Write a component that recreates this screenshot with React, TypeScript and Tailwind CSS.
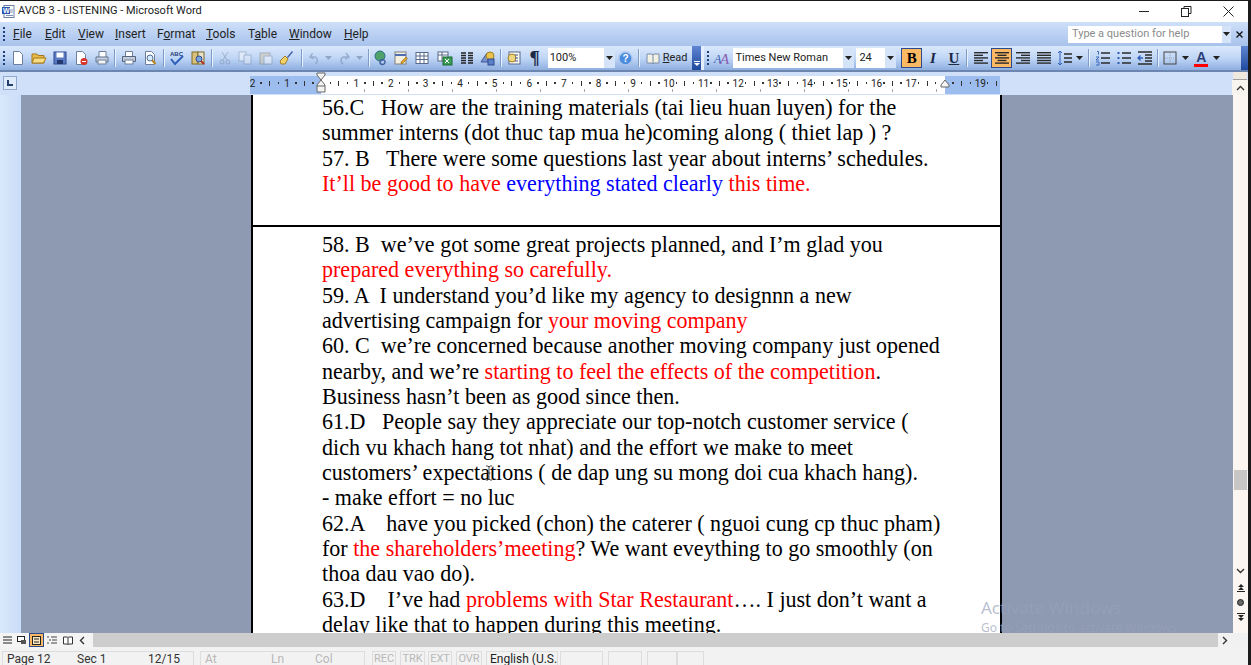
import type { ReactNode } from "react"

const uiFont = "font-['Roboto',sans-serif]"

function Sep({ className }: { className: string }) {
  return (
    <div className={`flex justify-center ${className}`}>
      <div className="w-px h-[18px] mt-[3px] bg-[#7f9cc9] border-r border-[#e8f1fd] box-content" />
    </div>
  )
}

function Slot({ className, children }: { className: string; children: ReactNode }) {
  return <div className={`flex items-center justify-center h-[24px] shrink-0 ${className}`}>{children}</div>
}

function Ico({ children, size = 16 }: { children: ReactNode; size?: number }) {
  return (
    <svg width={size} height={size} viewBox="0 0 16 16" fill="none">
      {children}
    </svg>
  )
}

function Grip() {
  return (
    <div className="flex flex-col gap-[2px]">
      {[0, 1, 2, 3].map((i) => (
        <div key={i} className="w-[2px] h-[2px] bg-[#1f3f7a]" />
      ))}
    </div>
  )
}

function DropArrow() {
  return (
    <svg width="7" height="4" viewBox="0 0 7 4">
      <path d="M0 0h7L3.5 4z" fill="#222" />
    </svg>
  )
}

function FadeArrow() {
  return (
    <svg width="7" height="4" viewBox="0 0 7 4">
      <path d="M0 0h7L3.5 4z" fill="#8ea6c8" />
    </svg>
  )
}

function Page({ mark }: { mark?: ReactNode }) {
  return (
    <Ico>
      <path d="M3.5 1.5h6l3 3v10h-9z" fill="#fff" stroke="#6d7f9c" />
      {mark}
    </Ico>
  )
}

function Lines({ kind }: { kind: "left" | "center" | "right" | "full" }) {
  const rows = kind === "full" ? [14, 14, 14, 14, 14] : [14, 9, 14, 9, 14]
  return (
    <svg width="16" height="14" viewBox="0 0 16 14">
      {rows.map((w, i) => {
        const x = kind === "center" ? 8 - w / 2 : kind === "right" ? 15 - w : 1
        return <rect key={i} x={x} y={1 + i * 2.6} width={w} height="1.4" fill="#2b2b2b" />
      })}
    </svg>
  )
}

function Toolbar() {
  return (
    <div className="flex h-[24px] w-full bg-gradient-to-b from-[#dbe8fb] via-[#c0d6f6] to-[#8fafe0] border-b-2 border-[#6c86b0] box-content">
      <Slot className="w-[7px]"><Grip /></Slot>
      <Slot className="w-[21px]"><Page /></Slot>
      <Slot className="w-[21px]">
        <Ico>
          <path d="M1 4h5l1 1.5h6V13H1z" fill="#e8b948" stroke="#a57a1e" />
          <path d="M3 8h12l-2.5 5H1z" fill="#f7dc84" stroke="#a57a1e" />
        </Ico>
      </Slot>
      <Slot className="w-[21px]">
        <Ico>
          <rect x="2" y="2" width="12" height="12" fill="#5a7bc4" stroke="#2f4a8f" />
          <rect x="4.5" y="2.5" width="7" height="5" fill="#fff" />
          <rect x="5" y="10" width="6" height="4" fill="#26396e" />
        </Ico>
      </Slot>
      <Slot className="w-[21px]">
        <Page mark={<g><circle cx="11" cy="11.5" r="3.5" fill="#d9342b" /><rect x="9" y="11" width="4" height="1" fill="#fff" /></g>} />
      </Slot>
      <Slot className="w-[21px]">
        <Ico>
          <path d="M5 1.5h7v6H5z" fill="#fff" stroke="#6d7f9c" />
          <path d="M2 7h12v5H2z" fill="#c9d3e2" stroke="#5f6f8a" />
          <rect x="4" y="10" width="8" height="4" fill="#f4f4f4" stroke="#6d7f9c" />
        </Ico>
      </Slot>
      <Sep className="w-[7px]" />
      <Slot className="w-[21px]">
        <Ico>
          <path d="M4.5 1.5h7v5h-7z" fill="#fff" stroke="#6d7f9c" />
          <path d="M1.5 6.5h13v5h-13z" fill="#c2cbd8" stroke="#55637c" />
          <rect x="4" y="10" width="8" height="4" fill="#fff" stroke="#6d7f9c" />
        </Ico>
      </Slot>
      <Slot className="w-[21px]">
        <Page mark={<g><circle cx="8" cy="8" r="3" fill="#d8ecff" stroke="#4c6a9a" /><path d="M10 10l3.5 4" stroke="#b8871b" strokeWidth="2" /></g>} />
      </Slot>
      <Sep className="w-[6px]" />
      <Slot className="w-[21px]">
        <svg width="18" height="16" viewBox="0 0 18 16">
          <text x="2" y="6" fontSize="6" fontWeight="700" fontFamily="Liberation Sans" fill="#27407c">ABC</text>
          <path d="M3 9l4 5 8-8" stroke="#2f5fb8" strokeWidth="2" fill="none" />
        </svg>
      </Slot>
      <Slot className="w-[21px]">
        <Ico>
          <rect x="2" y="2" width="6" height="12" fill="#d9c17a" stroke="#7f6a2a" />
          <rect x="8" y="2" width="6" height="12" fill="#e7e2c8" stroke="#7f6a2a" />
          <circle cx="9" cy="9" r="3" fill="#7aa4dc" stroke="#2f4a8f" />
          <path d="M11 11l3 3" stroke="#b53020" strokeWidth="2" />
        </Ico>
      </Slot>
      <Sep className="w-[6px]" />
      <Slot className="w-[20px] opacity-45">
        <Ico>
          <path d="M5 2l5 8M11 2L6 10" stroke="#6e7f99" />
          <circle cx="5" cy="12" r="2" stroke="#6e7f99" />
          <circle cx="11" cy="12" r="2" stroke="#6e7f99" />
        </Ico>
      </Slot>
      <Slot className="w-[21px] opacity-45">
        <Ico>
          <rect x="2" y="2" width="7" height="9" fill="#fff" stroke="#7d8ca6" />
          <rect x="7" y="5" width="7" height="9" fill="#eef3fa" stroke="#7d8ca6" />
        </Ico>
      </Slot>
      <Slot className="w-[20px] opacity-45">
        <Ico>
          <rect x="2" y="3" width="10" height="11" fill="#d6c79a" stroke="#7d7a6c" />
          <rect x="6" y="6" width="8" height="8" fill="#fff" stroke="#7d8ca6" />
        </Ico>
      </Slot>
      <Slot className="w-[21px]">
        <Ico>
          <path d="M9 7l5-6 1 1-5 6z" fill="#3d5fa8" />
          <path d="M2 11l5-5 3 3-3 5H3z" fill="#f0d268" stroke="#a27f22" />
        </Ico>
      </Slot>
      <Sep className="w-[10px]" />
      <Slot className="w-[15px] opacity-50">
        <Ico><path d="M6 3L3 7l4 2M3 7h6a4 4 0 010 7" stroke="#6b85ad" strokeWidth="1.5" /></Ico>
      </Slot>
      <Slot className="w-[13px]"><FadeArrow /></Slot>
      <Slot className="w-[19px] opacity-50">
        <Ico><path d="M10 3l3 4-4 2M13 7H7a4 4 0 000 7" stroke="#6b85ad" strokeWidth="1.5" /></Ico>
      </Slot>
      <Slot className="w-[12px]"><FadeArrow /></Slot>
      <Sep className="w-[6px]" />
      <Slot className="w-[19px]">
        <Ico>
          <circle cx="7" cy="6" r="5" fill="#4fa36a" stroke="#2d6d8a" />
          <path d="M8 11a2.5 2.5 0 015 0 2.5 2.5 0 01-5 0z" stroke="#41619c" strokeWidth="1.4" transform="translate(-1 1)" />
        </Ico>
      </Slot>
      <Slot className="w-[20px]">
        <Ico>
          <rect x="2" y="2" width="11" height="12" fill="#f4f0df" stroke="#7e7e7e" />
          <path d="M2 5h11" stroke="#4d6db0" strokeWidth="2" />
          <path d="M8 12l5-5 1.5 1.5-5 5H8z" fill="#e0a52f" stroke="#8c6414" strokeWidth=".6" />
        </Ico>
      </Slot>
      <Slot className="w-[22px]">
        <Ico>
          <rect x="2" y="2.5" width="12" height="11" fill="#fff" stroke="#58698a" />
          <path d="M2 6h12M2 9.5h12M6 2.5v11M10 2.5v11" stroke="#58698a" />
        </Ico>
      </Slot>
      <Slot className="w-[24px]">
        <Ico>
          <rect x="1" y="2" width="10" height="9" fill="#fff" stroke="#58698a" />
          <path d="M1 5h10M5 2v9" stroke="#58698a" />
          <rect x="6" y="7" width="9" height="8" fill="#3b9c55" stroke="#1d6a34" />
          <path d="M8 9l4 4M12 9l-4 4" stroke="#fff" />
        </Ico>
      </Slot>
      <Slot className="w-[20px]">
        <Ico>
          <path d="M2 3h5M2 5.5h5M2 8h5M2 10.5h5M2 13h5M9 3h5M9 5.5h5M9 8h5M9 10.5h5M9 13h5" stroke="#222" strokeWidth="1.5" />
        </Ico>
      </Slot>
      <Slot className="w-[22px]">
        <Ico>
          <path d="M1 12l6-9 1 9z" fill="#7d95cf" stroke="#3a5596" />
          <circle cx="10" cy="6" r="4" fill="#e9c24c" stroke="#a27f22" />
          <rect x="8" y="9" width="6" height="6" fill="#5a80c6" stroke="#2f4a8f" />
        </Ico>
      </Slot>
      <Sep className="w-[5px]" />
      <Slot className="w-[21px]">
        <Ico>
          <rect x="3" y="2" width="11" height="12" fill="#fbfbf4" stroke="#58698a" />
          <circle cx="6" cy="8" r="4" fill="#efd680" stroke="#a27f22" />
          <path d="M9 5h3M9 8h3M9 11h3" stroke="#3a5596" />
        </Ico>
      </Slot>
      <Slot className="w-[20px] font-['Liberation_Serif',serif] font-bold text-[19px] text-[#1c2a44]">¶</Slot>
      <div className="w-[3px]" />
      <Slot className="w-[67px]">
        <div className={`flex items-center w-full h-[20px] bg-white ${uiFont} text-[11px] text-[#222]`}>
          <span className="pl-[2px] flex-1">100%</span>
          <div className="w-[11px] h-[20px] bg-[#d4e3f8] flex items-center justify-center"><DropArrow /></div>
        </div>
      </Slot>
      <Slot className="w-[22px]">
        <svg width="15" height="15" viewBox="0 0 15 15">
          <circle cx="7.5" cy="7.5" r="6.5" fill="#4b8be0" stroke="#a8c4ea" strokeWidth="1.4" />
          <text x="7.5" y="11" textAnchor="middle" fontSize="10" fontWeight="700" fontFamily="Liberation Sans" fill="#fff">?</text>
        </svg>
      </Slot>
      <Sep className="w-[5px]" />
      <Slot className={`w-[48px] gap-[3px] ${uiFont} text-[11px] text-[#222] pl-[2px]`}>
        <svg width="14" height="12" viewBox="0 0 14 12">
          <path d="M1 2h5l1 1 1-1h5v9H8l-1 1-1-1H1z" fill="#f3f1e4" stroke="#7b8da9" />
          <path d="M7 3v8" stroke="#7b8da9" />
        </svg>
        <span><span className="underline">R</span>ead</span>
      </Slot>
      <div className="w-[2px]" />
      <div className="w-[10px] h-[24px] bg-gradient-to-b from-[#5f86d2] to-[#1f4a9e] flex flex-col items-center justify-end pb-[4px] gap-px">
        <div className="w-[6px] h-px bg-white" />
        <svg width="6" height="3" viewBox="0 0 6 3"><path d="M0 0h6L3 3z" fill="#fff" /></svg>
      </div>
      <div className="w-[3px] bg-[#e3edfb]" />
      <Slot className="w-[8px]"><Grip /></Slot>
      <Slot className="w-[19px]">
        <svg width="18" height="16" viewBox="0 0 18 16">
          <text x="1" y="13" fontSize="12" fontStyle="italic" fontFamily="Liberation Serif" fill="#3c5cb0">A</text>
          <text x="7" y="14" fontSize="15" fontStyle="italic" fontFamily="Liberation Serif" fill="#8a5fb0">A</text>
        </svg>
      </Slot>
      <div className="w-[2px]" />
      <Slot className="w-[121px]">
        <div className={`flex items-center w-full h-[20px] bg-white ${uiFont} text-[11px] text-[#222]`}>
          <span className="pl-[2px] flex-1 whitespace-nowrap">Times New Roman</span>
          <div className="w-[11px] h-[20px] bg-[#d4e3f8] flex items-center justify-center"><DropArrow /></div>
        </div>
      </Slot>
      <div className="w-[2px]" />
      <Slot className="w-[40px]">
        <div className={`flex items-center w-full h-[20px] bg-white ${uiFont} text-[11px] text-[#222]`}>
          <span className="pl-[3px] flex-1">24</span>
          <div className="w-[11px] h-[20px] bg-[#d4e3f8] flex items-center justify-center"><DropArrow /></div>
        </div>
      </Slot>
      <div className="w-[5px]" />
      <Slot className="w-[21px]">
        <div className="w-[21px] h-[20px] flex items-center justify-center bg-[#fdb864] border border-[#2a4a8c] font-['Liberation_Serif',serif] font-bold text-[15px] text-black">B</div>
      </Slot>
      <Slot className="w-[21px] font-['Liberation_Serif',serif] font-bold italic text-[15px] text-[#1d2a44]">I</Slot>
      <Slot className="w-[21px] font-['Liberation_Serif',serif] font-bold underline text-[15px] text-[#1d2a44]">U</Slot>
      <Sep className="w-[6px]" />
      <Slot className="w-[21px]"><Lines kind="left" /></Slot>
      <Slot className="w-[21px]">
        <div className="w-[21px] h-[20px] flex items-center justify-center bg-[#fdb864] border border-[#2a4a8c]"><Lines kind="center" /></div>
      </Slot>
      <Slot className="w-[21px]"><Lines kind="right" /></Slot>
      <Slot className="w-[21px]"><Lines kind="full" /></Slot>
      <Slot className="w-[31px] gap-[3px]">
        <svg width="16" height="16" viewBox="0 0 16 16">
          <path d="M3 1v14M1 3l2-2 2 2M1 13l2 2 2-2" stroke="#2f5fb8" fill="none" />
          <path d="M7 4h8M7 8h8M7 12h8" stroke="#2b2b2b" strokeWidth="1.3" />
        </svg>
        <DropArrow />
      </Slot>
      <Sep className="w-[7px]" />
      <Slot className="w-[21px]">
        <Ico>
          <path d="M6 3h9M6 8h9M6 13h9" stroke="#2b2b2b" strokeWidth="1.4" />
          <path d="M2 1.5h1.5v3M1 7h3l-3 3h3M1 12h3v3H1" stroke="#2f5fb8" strokeWidth=".9" />
        </Ico>
      </Slot>
      <Slot className="w-[21px]">
        <Ico>
          <path d="M6 3h9M6 8h9M6 13h9" stroke="#2b2b2b" strokeWidth="1.4" />
          <path d="M1.5 2h2v2h-2zM1.5 7h2v2h-2zM1.5 12h2v2h-2z" fill="#2f5fb8" />
        </Ico>
      </Slot>
      <Slot className="w-[22px]">
        <Ico>
          <path d="M1 2h14M8 5h7M8 8h7M8 11h7M1 14h14" stroke="#2b2b2b" strokeWidth="1.4" />
          <path d="M6 8H1M3.5 5.5L1 8l2.5 2.5" stroke="#2f5fb8" strokeWidth="1.3" fill="none" />
        </Ico>
      </Slot>
      <Sep className="w-[4px]" />
      <Slot className="w-[20px]">
        <Ico>
          <rect x="2" y="2" width="12" height="12" stroke="#444" />
          <path d="M8 3v10M3 8h10" stroke="#9aa5b8" strokeDasharray="1 1" />
        </Ico>
      </Slot>
      <Slot className="w-[11px]"><DropArrow /></Slot>
      <Slot className="w-[20px] relative">
        <div className="flex flex-col items-center">
          <span className="font-['Liberation_Sans',sans-serif] font-bold text-[14px] leading-[14px] text-[#2a3f78]">A</span>
          <div className="w-[14px] h-[3px] bg-[#ff0000]" />
        </div>
      </Slot>
      <Slot className="w-[11px]"><DropArrow /></Slot>
      <div className="w-[19px]" />
      <div className="w-[7px] h-[24px] bg-gradient-to-b from-[#5f86d2] to-[#1f4a9e]" />
    </div>
  )
}

const rulerNumbers = ["2", "1", "", "1", "2", "3", "4", "5", "6", "7", "8", "9", "10", "11", "12", "13", "14", "15", "16", "17", "", "19"]

function Ruler() {
  return (
    <div className="relative flex h-[23px] w-full bg-[#cfe0f8]">
      <div className="w-[21px] flex items-start justify-start pl-[3px] pt-[4px]">
        <div className="w-[14px] h-[14px] bg-[#dfeafa] border border-[#8fa9cf] flex items-center justify-center">
          <div className="w-[6px] h-[6px] border-l-2 border-b-2 border-[#25406f]" />
        </div>
      </div>
      <div className="w-[229px]" />
      <div className="relative w-[750px] h-[18px] mt-[4px] overflow-hidden bg-white">
        <div className="absolute left-0 top-0 bottom-0 w-[71px] bg-[#9dbdee]" />
        <div className="absolute right-0 top-0 bottom-0 w-[55px] bg-[#9dbdee]" />
        <div className="absolute left-[-1.8px] top-0 flex h-[14px] items-center">
          {rulerNumbers.map((n, i) => (
            <div key={i} className="flex w-[34.6px] items-center font-['Roboto',sans-serif] text-[10px] text-[#222]">
              <span className="w-1/4 text-center">{n}</span>
              <span className="w-1/4 flex justify-center"><span className="w-[1.5px] h-[1.5px] bg-[#333]" /></span>
              <span className="w-1/4 flex justify-center"><span className="w-px h-[5px] bg-[#333]" /></span>
              <span className="w-1/4 flex justify-center"><span className="w-[1.5px] h-[1.5px] bg-[#333]" /></span>
            </div>
          ))}
        </div>
        <div className="absolute left-[71px] bottom-[2px] flex">
          {Array.from({ length: 14 }).map((_, i) => (
            <div key={i} className="w-[44px] h-[3px] border-r border-[#a9a9a9]" />
          ))}
        </div>
      </div>
      <div className="w-[232px]" />
      <div className="w-[16px] flex flex-col">
        <div className="h-[8px] mx-px bg-[#efe9df] border-b border-[#9e9e9e]" />
        <div className="flex-1 flex items-center justify-center bg-[#f7f3ee]">
          <svg width="9" height="6" viewBox="0 0 9 6"><path d="M1 5l3.5-3.5L8 5" stroke="#333" strokeWidth="1.4" fill="none" /></svg>
        </div>
      </div>
      {/* indent markers sit over the ruler */}
      <svg className="absolute left-[316px] top-0" width="10" height="22" viewBox="0 0 10 22">
        <path d="M1 1h8v2L5 8 1 3z" fill="#f4f4f4" stroke="#666" />
        <path d="M5 8l4 5v7H1v-7z" fill="#f4f4f4" stroke="#666" />
        <path d="M1 14h8" stroke="#666" />
      </svg>
      <svg className="absolute left-[940px] top-[7px]" width="10" height="9" viewBox="0 0 10 9">
        <path d="M5 1l4 5v2H1V6z" fill="#f4f4f4" stroke="#666" />
      </svg>
    </div>
  )
}

function Line({ children }: { children: ReactNode }) {
  return <p className="h-[25.33px] leading-[25.33px] whitespace-pre">{children}</p>
}

function Red({ children }: { children: ReactNode }) {
  return <span className="text-[#ff0000]">{children}</span>
}

function Blue({ children }: { children: ReactNode }) {
  return <span className="text-[#0000ff]">{children}</span>
}

function Document() {
  return (
    <div className="relative flex h-[538px] w-full overflow-hidden">
      <div className="w-[21px] bg-gradient-to-r from-[#d9e8fc] to-[#c9dcf8]" />
      <div className="w-[230px] bg-[#8e99b2]" />
      <div className="w-[751px] border-x-2 border-black bg-white font-['Liberation_Serif',serif] text-[22.06px] text-black overflow-hidden">
        <div className="pl-[69px] h-[132px] border-b-2 border-black">
          <Line>56.C   How are the training materials (tai lieu huan luyen) for the</Line>
          <Line>summer interns (dot thuc tap mua he)coming along ( thiet lap ) ?</Line>
          <Line>57. B   There were some questions last year about interns’ schedules.</Line>
          <Line>
            <Red>It’ll be good to have </Red><Blue>everything stated </Blue><Blue>clearly</Blue><Red> this time.</Red>
          </Line>
        </div>
        <div className="pl-[69px] pt-[5px]">
          <Line>58. B  we’ve got some great projects planned, and I’m glad you</Line>
          <Line><Red>prepared everything so carefully.</Red></Line>
          <Line>59. A  I understand you’d like my agency to designnn a new</Line>
          <Line>advertising campaign for <Red>your moving company</Red></Line>
          <Line>60. C  we’re concerned because another moving company just opened</Line>
          <Line>nearby, and we’re <Red>starting to feel the effects of the competition</Red>.</Line>
          <Line>Business hasn’t been as good since then.</Line>
          <Line>61.D   People say they appreciate our top-notch customer service (</Line>
          <Line>dich vu khach hang tot nhat) and the effort we make to meet</Line>
          <Line>customers’ expectations ( de dap ung su mong doi cua khach hang).</Line>
          <Line>- make effort = no luc</Line>
          <Line>62.A    have you picked (chon) the caterer ( nguoi cung cp thuc pham)</Line>
          <Line>for <Red>the shareholders’meeting</Red>? We want eveything to go smoothly (on</Line>
          <Line>thoa dau vao do).</Line>
          <Line>63.D    I’ve had <Red>problems with Star Restaurant</Red>…. I just don’t want a</Line>
          <Line>delay like that to happen during this meeting.</Line>
        </div>
      </div>
      <div className="w-[231px] bg-[#8e99b2]" />
      <div className="w-[15px] flex flex-col items-center bg-[#fbf6f1]">
        <div className="h-[375px]" />
        <div className="w-[13px] h-[20px] bg-[#c9c7c5]" />
        <div className="h-[78px]" />
        <svg width="9" height="6" viewBox="0 0 9 6"><path d="M1 1l3.5 3.5L8 1" stroke="#333" strokeWidth="1.4" fill="none" /></svg>
        <div className="h-[10px]" />
        <svg width="8" height="8" viewBox="0 0 8 8"><path d="M4 0L7 3H1zM4 3L7 6H1zM0 7h8v1H0z" fill="#222" /></svg>
        <div className="h-[7px]" />
        <div className="w-[7px] h-[7px] rounded-full bg-[#666] border border-[#222]" />
        <div className="h-[7px]" />
        <svg width="8" height="8" viewBox="0 0 8 8"><path d="M0 0h8v1H0zM1 2h6L4 5zM1 5h6L4 8z" fill="#222" /></svg>
      </div>
      {/* mouse cursor and the watermark lie over the page */}
      <svg className="absolute left-[485px] top-[370px]" width="8" height="16" viewBox="0 0 8 16">
        <path d="M1 1h2l1 1 1-1h2M4 2v12M1 15h2l1-1 1 1h2M2.500 8h3" stroke="#444" fill="none" />
      </svg>
      <div className="absolute left-[981px] top-[503px] font-['Noto_Sans',sans-serif] text-[17px] leading-[20px] text-[#98a2b8]/70 whitespace-nowrap">
        <p>Activate Windows</p>
        <p className="text-[12px] leading-[20px]">Go to Settings to activate Windows.</p>
      </div>
    </div>
  )
}

function HScroll() {
  return (
    <div className="flex h-[14px] w-full bg-[#f0f0f0]">
      <div className="flex w-[93px] items-center bg-[#f4f4f4]">
        <div className="w-[14px] flex justify-center">
          <svg width="9" height="8" viewBox="0 0 9 8"><path d="M0 1h9M0 4h9M0 7h9" stroke="#222" /></svg>
        </div>
        <div className="w-[15px] flex justify-center">
          <svg width="9" height="8" viewBox="0 0 9 8"><rect x=".5" y=".5" width="7" height="5" stroke="#222" fill="#fff" /><rect x="4" y="4" width="5" height="4" fill="#555" /></svg>
        </div>
        <div className="w-[15px] h-[14px] flex items-center justify-center bg-[#fdb864] border border-[#2a4a8c]">
          <svg width="9" height="9" viewBox="0 0 9 9"><rect x=".5" y=".5" width="8" height="8" stroke="#222" fill="#fde8c4" /><path d="M2 3h5M2 6h5" stroke="#222" /></svg>
        </div>
        <div className="w-[16px] flex justify-center">
          <svg width="10" height="8" viewBox="0 0 10 8"><path d="M0 1h2M4 1h6M2 4h2M5 4h5M0 7h2M4 7h6" stroke="#444" /></svg>
        </div>
        <div className="w-[15px] flex justify-center">
          <svg width="10" height="9" viewBox="0 0 10 9"><path d="M.5 1h4l.5.5.5-.5h4v7h-4l-.5.5-.5-.5h-4zM5 1.500v7" stroke="#333" fill="#fff" /></svg>
        </div>
        <div className="w-[14px] flex justify-center">
          <svg width="6" height="9" viewBox="0 0 6 9"><path d="M5 1L1.5 4.5 5 8" stroke="#333" strokeWidth="1.4" fill="none" /></svg>
        </div>
      </div>
      <div className="w-[1125px] bg-[#cdcdcd]" />
      <div className="w-[30px] flex items-center pl-[4px] bg-[#f1f1f1]">
        <svg width="6" height="9" viewBox="0 0 6 9"><path d="M1 1l3.5 3.5L1 8" stroke="#333" strokeWidth="1.4" fill="none" /></svg>
      </div>
    </div>
  )
}

function Box({ className, children }: { className: string; children?: ReactNode }) {
  return <div className={`flex items-center h-[14px] leading-none border-x border-t border-[#dddddd] shrink-0 ${className}`}>{children}</div>
}

function StatusBar() {
  return (
    <div className={`flex items-end h-[18px] w-full bg-[#f2f2f2] ${uiFont} text-[12px] text-[#333]`}>
      <div className="w-[2px]" />
      <Box className="w-[192px]">
        <span className="ml-[4px] w-[70px]">Page 12</span>
        <span className="w-[71px]">Sec 1</span>
        <span>12/15</span>
      </Box>
      <div className="w-[6px]" />
      <Box className="w-[165px] text-[#b8b8b8]">
        <span className="ml-[4px] w-[66px]">At</span>
        <span className="w-[44px]">Ln</span>
        <span>Col</span>
      </Box>
      <div className="w-[7px]" />
      <Box className="w-[24px] justify-center text-[11px] text-[#b8b8b8]">REC</Box>
      <div className="w-[4px]" />
      <Box className="w-[25px] justify-center text-[11px] text-[#b8b8b8]">TRK</Box>
      <div className="w-[3px]" />
      <Box className="w-[24px] justify-center text-[11px] text-[#b8b8b8]">EXT</Box>
      <div className="w-[4px]" />
      <Box className="w-[26px] justify-center text-[11px] text-[#b8b8b8]">OVR</Box>
      <div className="w-[4px]" />
      <Box className="w-[72px] pl-[3px] whitespace-nowrap text-[#222]">English (U.S.</Box>
      <div className="w-[2px]" />
      <Box className="w-[43px]" />
      <div className="w-[5px]" />
      <Box className="w-[34px]" />
      <div className="w-[5px]" />
      <Box className="w-[30px]" />
      <Box className="w-[27px]" />
    </div>
  )
}

export default function App() {
  return (
    <div className="w-[1251px] h-[665px] overflow-hidden flex flex-col bg-white border-t border-r-[3px] border-[#1b1b1b] relative">
      {/* title bar */}
      <div className="flex items-center h-[21px] shrink-0 bg-white">
        <svg className="ml-[2px]" width="13" height="13" viewBox="0 0 13 13">
          <rect x="2" y=".5" width="10" height="12" fill="#fff" stroke="#6c7fa6" />
          <rect x="0" y="2" width="8" height="7" fill="#2c57b0" />
          <text x="1" y="8" fontSize="7" fontWeight="700" fontFamily="Liberation Sans" fill="#fff">W</text>
          <path d="M8 5h3M8 7h3M4 10.5h7" stroke="#7f93b8" />
        </svg>
        <span className={`ml-[3px] ${uiFont} text-[11px] text-[#222]`}>AVCB 3 - LISTENING - Microsoft Word</span>
        <div className="flex-1" />
        <svg width="11" height="2" viewBox="0 0 11 2"><rect width="10" height="1" fill="#222" /></svg>
        <svg className="ml-[31px]" width="11" height="11" viewBox="0 0 11 11"><path d="M3 2.5V.5h7v7H8" stroke="#222" fill="none" /><rect x=".5" y="2.5" width="7" height="8" stroke="#222" fill="none" /></svg>
        <svg className="ml-[31px] mr-[14px]" width="11" height="11" viewBox="0 0 11 11"><path d="M.5.5l10 10M10.5.5l-10 10" stroke="#222" /></svg>
      </div>
      {/* menu bar */}
      <div className={`flex items-center h-[24px] shrink-0 bg-gradient-to-b from-[#cfe0f9] to-[#a7c2ec] ${uiFont} text-[12px] text-[#222]`}>
        <div className="w-[13px] pl-[3px]"><Grip /></div>
        <span className="w-[32px]"><span className="underline">F</span>ile</span>
        <span className="w-[33px]"><span className="underline">E</span>dit</span>
        <span className="w-[37px]"><span className="underline">V</span>iew</span>
        <span className="w-[42px]"><span className="underline">I</span>nsert</span>
        <span className="w-[49px]">F<span className="underline">o</span>rmat</span>
        <span className="w-[42px]"><span className="underline">T</span>ools</span>
        <span className="w-[41px]">T<span className="underline">a</span>ble</span>
        <span className="w-[55px]"><span className="underline">W</span>indow</span>
        <span><span className="underline">H</span>elp</span>
        <div className="flex-1" />
        <div className="flex items-center w-[163px] h-[17px] bg-white">
          <span className="pl-[4px] flex-1 text-[11px] text-[#8b8b8b]">Type a question for help</span>
          <div className="w-[9px] h-[17px] bg-[#d4e3f8] flex items-center justify-center"><DropArrow /></div>
        </div>
        <svg className="ml-[5px] mr-[5px]" width="7" height="7" viewBox="0 0 7 7"><path d="M.5.5l6 6M6.5.5l-6 6" stroke="#111" strokeWidth="1.3" /></svg>
      </div>
      <Toolbar />
      <Ruler />
      <Document />
      <HScroll />
      <StatusBar />
    </div>
  )
}
